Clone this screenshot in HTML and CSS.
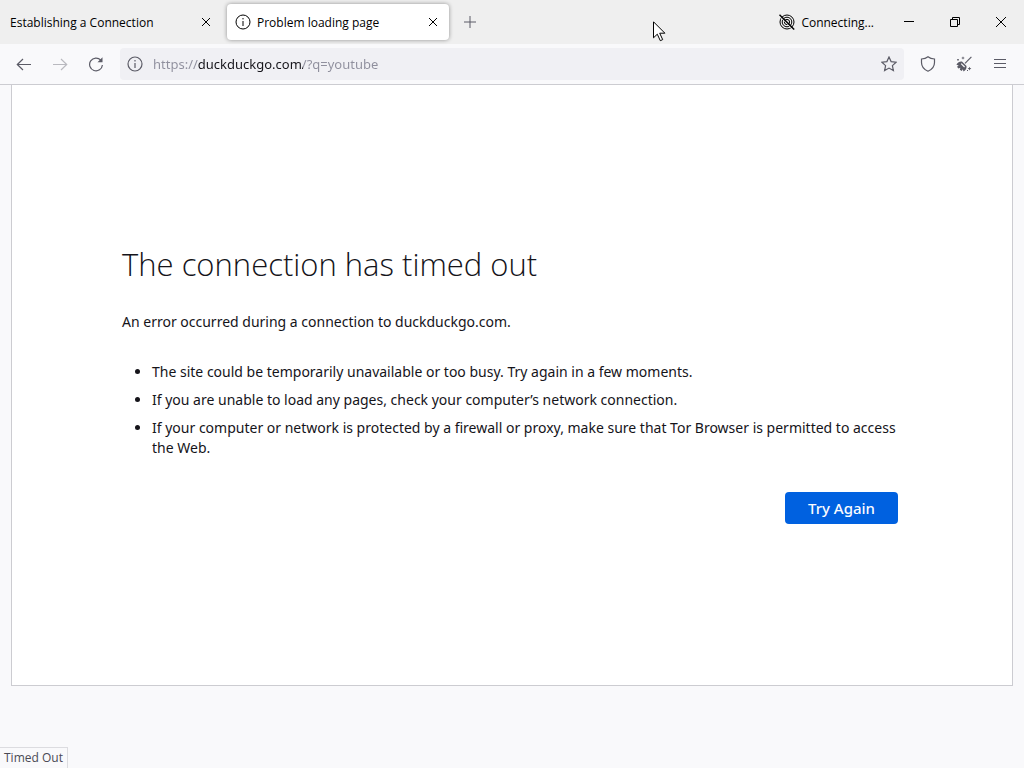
FILE: index.html
```html
<!DOCTYPE html>
<html lang="en">
  <head>
    <meta charset="UTF-8" />
    <meta name="viewport" content="width=device-width, initial-scale=1.0" />
    <title>Problem loading page</title>
    <link rel="stylesheet" href="styles.css">
  </head>
  <body>
    <header class="tab-bar">
      <div class="tab">
        <span class="tab-label">Establishing a Connection</span>
        <button class="tab-close" aria-label="Close tab">
          <svg width="10" height="10" viewBox="0 0 10 10"><path d="M1 1l8 8M9 1L1 9" /></svg>
        </button>
      </div>
      <div class="tab active">
        <svg class="tab-icon" width="16" height="16" viewBox="0 0 16 16">
          <circle cx="8" cy="8" r="7" />
          <path d="M8 7v5M8 4v1.4" />
        </svg>
        <span class="tab-label">Problem loading page</span>
        <button class="tab-close" aria-label="Close tab">
          <svg width="10" height="10" viewBox="0 0 10 10"><path d="M1 1l8 8M9 1L1 9" /></svg>
        </button>
      </div>
      <button class="new-tab" aria-label="New tab">
        <svg width="12" height="12" viewBox="0 0 12 12"><path d="M6 0v12M0 6h12" /></svg>
      </button>

      <div class="tor-status">
        <svg width="16" height="16" viewBox="0 0 16 16">
          <circle cx="8" cy="8" r="7" />
          <circle cx="8" cy="8" r="4.8" />
          <circle cx="8" cy="8" r="2.6" />
          <path class="slash-gap" d="M.5 2.2l13.6 13.6" />
          <path class="slash" d="M.5.8l14.7 14.7" />
        </svg>
        <span>Connecting...</span>
      </div>

      <div class="window-controls">
        <button aria-label="Minimize">
          <svg width="10" height="10" viewBox="0 0 10 10"><path d="M0 4.5h10" /></svg>
        </button>
        <button aria-label="Restore">
          <svg width="10" height="10" viewBox="0 0 10 10">
            <path d="M.5 2.5h7v7h-7zM2.5 2.5v-2h7v7h-2" />
          </svg>
        </button>
        <button aria-label="Close">
          <svg width="10" height="10" viewBox="0 0 10 10"><path d="M0 0l10 10M10 0L0 10" /></svg>
        </button>
      </div>
    </header>

    <nav class="nav-bar">
      <button aria-label="Back">
        <svg width="16" height="16" viewBox="0 0 16 16"><path d="M15 8.500H1.500M7 3L1.300 8.500 7 14" /></svg>
      </button>
      <button aria-label="Forward" disabled>
        <svg width="16" height="16" viewBox="0 0 16 16"><path d="M1 8.500h13.500M9 3l5.700 5.500L9 14" /></svg>
      </button>
      <button aria-label="Reload">
        <svg width="16" height="16" viewBox="0 0 16 16">
          <path d="M12.8 4.2A6.4 6.4 0 1 0 14.4 9" />
          <path class="solid" d="M14.5 1.2v5h-5z" />
        </svg>
      </button>

      <div class="url-bar">
        <button aria-label="Site information">
          <svg width="16" height="16" viewBox="0 0 16 16">
            <circle cx="8" cy="8" r="7" />
            <path d="M8 7v5M8 4v1.4" />
          </svg>
        </button>
        <input type="text" class="url" aria-label="Address" value="https://duckduckgo.com/?q=youtube" />
        <button aria-label="Bookmark this page">
          <svg width="16" height="16" viewBox="0 0 16 16">
            <path d="M8 1l2.100 4.600 5 .6-3.700 3.400 1 5L8 12.100l-4.400 2.500 1-5L.9 6.200l5-.6z" />
          </svg>
        </button>
      </div>

      <button aria-label="Security level">
        <svg width="16" height="16" viewBox="0 0 16 16">
          <path d="M8 .8C6 2.400 3.700 2.900 1.500 3v3.500c0 4 2.500 7 6.500 8.700 4-1.700 6.500-4.700 6.500-8.700V3C12.300 2.900 10 2.400 8 .8z" />
        </svg>
      </button>
      <button aria-label="New identity">
        <svg width="16" height="16" viewBox="0 0 16 16">
          <path d="M15.400.8L9 7.300" />
          <path class="solid" d="M6.200 5.700l4.300 4.300c.4 2.300-.9 4.600-3 5.500l-.7-2.200-1 1.700-2-1.300.6-2-2 .8L1 10.800l1.700-1.200L.4 8.700C2 6.200 4 5.200 6.200 5.700z" />
          <path class="light" d="M5.200 7.600l3.400 3.400" />
          <path class="solid" d="M7 .2l.5 1.300 1.300.5-1.300.5L7 3.800l-.5-1.300L5.200 2l1.300-.5zM13.500 10.700l.6 1.300 1.300.6-1.300.6-.6 1.300-.6-1.300-1.300-.6 1.300-.6zM1.200 3h1.600v1.600H1.200zM11 14h1v1h-1z" />
        </svg>
      </button>
      <button aria-label="Menu">
        <svg width="16" height="16" viewBox="0 0 16 16"><path d="M2 3.500h12M2 7.500h12M2 11.500h12" /></svg>
      </button>
    </nav>

    <main class="page">
      <section class="error">
        <h1>The connection has timed out</h1>
        <p>An error occurred during a connection to duckduckgo.com.</p>
        <ul>
          <li>The site could be temporarily unavailable or too busy. Try again in a few moments.</li>
          <li>If you are unable to load any pages, check your computer’s network connection.</li>
          <li>
            If your computer or network is protected by a firewall or proxy,
            make sure that Tor Browser is permitted to access the Web.
          </li>
        </ul>
        <button class="try-again">Try Again</button>
      </section>
    </main>

    <div class="status-panel">Timed Out</div>

    <svg class="cursor" width="13" height="21" viewBox="0 0 13 21">
      <path d="M.5.8v16l3.800-3.600 3 6.500 2.400-1.100-3-6.400h5.200z" />
    </svg>
  </body>
</html>
```
FILE: styles.css
```css
* {
  box-sizing: border-box;
}

body {
  position: relative;
  display: flex;
  flex-direction: column;
  min-height: 100vh;
  margin: 0;
  font-family: "Noto Sans", "Open Sans", sans-serif;
  font-size: 14px;
  color: #15141a;
  background: #f9f9fb;
}

button {
  display: flex;
  align-items: center;
  justify-content: center;
  padding: 0;
  border: none;
  background: none;
  font-family: inherit;
  color: inherit;
}

svg {
  flex: none;
  fill: none;
  stroke: currentColor;
}

svg .solid {
  fill: currentColor;
  stroke: none;
}

/* tabs */
.tab-bar {
  display: flex;
  align-items: center;
  height: 44px;
  font-family: "Open Sans", sans-serif;
  font-size: 12px;
  color: #000;
  background: #efefef;
}

.tab {
  display: flex;
  align-items: center;
  gap: 6px;
  width: 222px;
  height: 36px;
  margin-right: 5px;
  padding: 0 4px 0 10px;
  border-radius: 4px;
}

.tab.active {
  padding-left: 8px;
  background: #fff;
  box-shadow: 0 0 4px rgba(0, 0, 0, 0.4);
}

.tab-label {
  flex: 1;
  white-space: nowrap;
}

.tab-close {
  width: 24px;
  height: 24px;
}

.new-tab {
  width: 32px;
  height: 32px;
  color: #5b5b66;
}

.tor-status {
  display: flex;
  align-items: center;
  gap: 6px;
  margin-left: auto;
  margin-right: 12px;
}

.slash-gap {
  stroke: #efefef;
}

.slash {
  stroke-width: 1.5;
}

.window-controls {
  display: flex;
}

.window-controls button {
  width: 46px;
  height: 44px;
}

/* toolbar */
.nav-bar {
  display: flex;
  align-items: center;
  gap: 4px;
  height: 41px;
  padding: 0 8px;
  border-bottom: 1px solid #ccccd1;
  color: #5b5b66;
}

.nav-bar button {
  width: 32px;
  height: 32px;
}

.nav-bar button:disabled {
  opacity: 0.4;
}

.nav-bar svg {
  stroke-width: 1.2;
}

.nav-bar .light {
  stroke: #f9f9fb;
}

.url-bar {
  display: flex;
  flex: 1;
  align-items: center;
  height: 32px;
  margin: 0 4px;
  border-radius: 4px;
  background: #f0f0f4;
}

.url-bar button {
  width: 30px;
}

/* the host part of the address is darker than the rest */
.url {
  flex: 1;
  min-width: 0;
  margin-left: 3px;
  padding: 0;
  border: none;
  outline: none;
  font-family: inherit;
  font-size: 13px;
  background: linear-gradient(90deg, #8f8f9d 45px, #15141a 45px 150px, #8f8f9d 150px);
  -webkit-background-clip: text;
  background-clip: text;
  -webkit-text-fill-color: transparent;
}

/* error page */
.page {
  display: flex;
  flex: 1;
  align-items: center;
  margin: 0 11px 82px;
  padding: 0 114px 2px 110px;
  border: 1px solid #ccccd1;
  border-top: none;
  background: #fff;
}

.error {
  flex: 1;
  line-height: 20px;
}

.error h1 {
  margin: 0 0 28px;
  font-family: "Open Sans", sans-serif;
  font-size: 31px;
  font-weight: 300;
  line-height: 40px;
}

.error p {
  margin: 0 0 30px;
}

.error ul {
  margin: 0 0 34px;
  padding-left: 30px;
}

.error li {
  margin-bottom: 8px;
}

.try-again {
  min-width: 113px;
  height: 32px;
  margin-left: auto;
  border-radius: 4px;
  font-size: 15px;
  font-weight: 500;
  color: #fbfbfe;
  background: #0061e0;
}

.status-panel {
  position: absolute;
  bottom: 0;
  left: 0;
  padding: 1px 4px;
  border: 1px solid #dcdce0;
  border-width: 1px 1px 0 0;
  font-family: "Open Sans", sans-serif;
  font-size: 12px;
  line-height: 18px;
  color: #4a4a55;
  background: #f9f9fb;
}

.cursor {
  position: absolute;
  top: 21px;
  left: 653px;
  fill: #fff;
  stroke: #000;
}
```
